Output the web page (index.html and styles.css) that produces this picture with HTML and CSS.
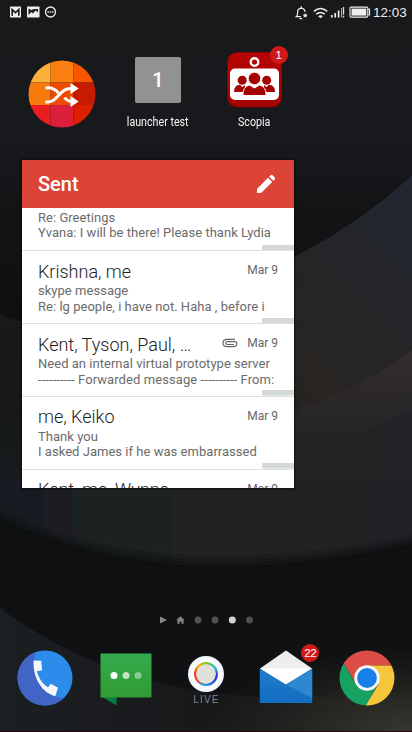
FILE: index.html
```html
<!DOCTYPE html>
<html lang="en">
<head>
<meta charset="utf-8">
<title>Home screen</title>
<link rel="stylesheet" href="styles.css">
</head>
<body>
<div class="phone">
  <svg class="wallpaper" viewBox="0 0 412 732" aria-hidden="true">
    <defs>
      <linearGradient id="base" x1="0" y1="0" x2="0" y2="1"><stop offset="0" stop-color="#18191b"/><stop offset=".2" stop-color="#17191c"/><stop offset=".28" stop-color="#131416"/><stop offset=".42" stop-color="#0e1011"/><stop offset="1" stop-color="#101112"/></linearGradient>
      <linearGradient id="mid" x1="0" y1="1" x2="1" y2="0"><stop offset="0" stop-color="#141719"/><stop offset=".5" stop-color="#282522"/><stop offset=".75" stop-color="#242529"/><stop offset="1" stop-color="#232733"/></linearGradient>
      <linearGradient id="low" x1="0" y1="0" x2="1" y2="0"><stop offset="0" stop-color="#171c1f"/><stop offset=".25" stop-color="#1b2021"/><stop offset=".6" stop-color="#242320"/><stop offset="1" stop-color="#232428"/></linearGradient>
      <linearGradient id="left" x1="0" y1="0" x2="0" y2="1"><stop offset="0" stop-color="#1a1917"/><stop offset=".6" stop-color="#161817"/><stop offset="1" stop-color="#171c1f"/></linearGradient>
      <linearGradient id="rose" x1="0" y1="0" x2="0" y2="1"><stop offset="0" stop-color="#3a2f31" stop-opacity=".8"/><stop offset="1" stop-color="#2c292a" stop-opacity="0"/></linearGradient>
      <linearGradient id="corner" x1="0" y1="0" x2="1" y2="0"><stop offset="0" stop-color="#1c1f22"/><stop offset=".5" stop-color="#17181a"/><stop offset="1" stop-color="#141414"/></linearGradient>
      <radialGradient id="glow" cx="1" cy="1" r=".9"><stop offset="0" stop-color="#38362f"/><stop offset="1" stop-color="#35332c" stop-opacity="0"/></radialGradient>
      <filter id="soft" x="-10%" y="-20%" width="120%" height="140%"><feGaussianBlur stdDeviation="5"/></filter>
    </defs>
    <rect width="412" height="732" fill="url(#base)"/>
    <path d="M412 176Q360 224 295 257Q220 300 120 340V480H412Z" fill="url(#mid)"/>
    <path d="M412 176Q360 224 295 257" fill="none" stroke="#303235" stroke-width=".6"/>
    <path d="M-30 430V498Q80 561 220 561Q340 560 442 530V430Z" fill="url(#low)" filter="url(#soft)"/>
    <path d="M412 350Q360 389 295 410Q200 440 0 440V480H412Z" fill="url(#low)"/>
    <path d="M412 350Q360 389 295 410V460L412 410Z" fill="url(#rose)"/>
    <path d="M0 314Q14 320 26 322V480H0Z" fill="url(#left)"/>
    <path d="M0 608Q44 641 100 664Q160 688 240 696Q330 700 412 692V732H0Z" fill="url(#corner)"/>
    <rect x="180" y="640" width="232" height="92" fill="url(#glow)"/>
    <rect y="731" width="412" height="1" fill="#24090f"/>
  </svg>

  <header class="status">
    <svg class="notices" width="50" height="14" viewBox="0 0 50 14">
      <rect x="1" y="1.5" width="11" height="11" rx=".7" fill="#eee"/><path d="M3.200 10.800V4.500L6.500 7.600L9.800 4.500v6.300" fill="none" stroke="#17181a" stroke-width="1.600"/>
      <rect x="18" y="1.500" width="12.500" height="11" rx=".7" fill="#eee"/><path d="M19.500 10L22.500 7L24 8.500L26.500 5.500L29 7.500V4H24.500L22.500 5L19.500 3.500Z" fill="#222"/>
      <circle cx="41.500" cy="7" r="5" fill="none" stroke="#eee" stroke-width="1.300"/><path d="M38.500 7h1.400M40.800 7h1.400M43.100 7h1.400" stroke="#eee" stroke-width="1.400"/>
    </svg>
    <div class="system">
      <svg width="76" height="16" viewBox="0 0 76 16" fill="none" stroke="#eee">
        <path d="M6 11.700H1.200Q2.600 10.500 2.600 8V6.600Q2.800 3.500 6.300 3.100Q9.800 3.500 10 7" stroke-width="1.200"/><path d="M6.300 1.300V3M4.500 13.700H7.200" stroke-width="1.200"/><path d="M10.200 7.900l.8 1.600 1.700.2-1.200 1.200.3 1.700-1.600-.8-1.600.8.300-1.700-1.200-1.200 1.700-.2z" fill="#eee" stroke="none"/>
        <path d="M18.800 6.300Q25.500 .8 32.300 6.300M21.200 9.200Q25.500 5.800 29.800 9.200" stroke-width="1.500"/><path d="M23.100 11.300Q25.500 9.200 27.900 11.300L25.500 13.300Z" fill="#eee" stroke="none"/>
        <path d="M36.800 10V12.500M40.200 8V12.500M43.600 5.500V12.500" stroke-width="1.700"/><path d="M46.600 3V12.500" stroke="#aaa" stroke-width="1.200"/><path d="M48.600 2V9.500M48.600 10.700V12.500" stroke-width="1.100"/>
        <rect x="55" y="2.100" width="17.800" height="10" rx="1" stroke-width="1.100"/><rect x="56.500" y="3.600" width="14.800" height="7" fill="#eee" stroke="none"/><path d="M73.300 4.200H74.500V10H73.300" stroke-width="1.200"/>
      </svg>
      <span class="clock">12:03</span>
    </div>
  </header>

  <section class="apps">
    <div class="app">
      <svg class="shuffle" width="68" height="68" viewBox="0 0 68 68">
        <clipPath id="disc"><circle cx="34" cy="34" r="33.500"/></clipPath>
        <g clip-path="url(#disc)"><path fill="#fdb03b" d="M0 0h22.500v22.500H0z"/><path fill="#f97f10" d="M22.500 0h23v22.500h-23z"/><path fill="#f85700" d="M45.500 0H68v22.500H45.500z"/><path fill="#f87a0c" d="M0 22.500h22.500V45H0z"/><path fill="#ed4a02" d="M22.500 22.500h23V45h-23z"/><path fill="#c51b00" d="M45.500 22.500H68V45H45.500z"/><path fill="#ed1c20" d="M0 45h22.500v23H0z"/><path fill="#dc203b" d="M22.500 45h23v23h-23z"/><path fill="#dd2000" d="M45.500 45H68v23H45.500z"/></g>
        <path d="M17.500 28Q25.500 27 30.500 33M17.500 42C31 43 30 28.500 43 28.500M36.500 37.500Q39 41 43 41.500" fill="none" stroke="#fff" stroke-width="3"/><path d="M42.500 23L50.700 28.500L42.500 34ZM42.500 36L50.700 41.500L42.500 47Z" fill="#fff"/>
      </svg>
    </div>
    <div class="app">
      <div class="tile">1</div>
      <div class="label">launcher test</div>
    </div>
    <div class="app scopia">
      <div class="appicon">
        <svg width="55" height="56" viewBox="0 0 55 56">
          <defs><linearGradient id="red" x1="0" y1="0" x2="0" y2="1"><stop offset="0" stop-color="#b80404"/><stop offset="1" stop-color="#a00303"/></linearGradient></defs>
          <rect x=".5" y=".5" width="54" height="54.500" rx="9.500" fill="url(#red)" stroke="#8c0000" stroke-width=".8"/>
          <circle cx="27.500" cy="10" r="3.800" fill="none" stroke="#fff" stroke-width="2.400"/>
          <rect x="3" y="16.500" width="49" height="31.500" rx="5" fill="#fff"/>
          <g fill="#a40404"><circle cx="15.200" cy="28.300" r="4.500"/><circle cx="39.700" cy="28.300" r="4.500"/><path d="M7 40Q7 33 13 32.800L15.500 35L18 33V40ZM48 40Q48 33 42 32.800L39.500 35L37 33V40Z"/><path d="M16 43.500Q15.500 34.500 22.500 33L27.500 36L32.500 33Q39.500 34.500 39 43.500Z" stroke="#fff" stroke-width="1"/><circle cx="27.500" cy="26.500" r="6.200" stroke="#fff" stroke-width=".8"/></g>
        </svg>
        <span class="badge">1</span>
      </div>
      <div class="label">Scopia</div>
    </div>
  </section>

  <section class="mail">
    <div class="mailhead"><h1>Sent</h1>
      <svg width="20" height="20" viewBox="0 0 20 20" fill="#fff"><path d="M1 19V14.900L12.100 3.800L16.200 7.900L5.100 19ZM13.200 2.700L14.800 1.100Q15.700.4 16.600 1.200L18.800 3.400Q19.600 4.300 18.900 5.200L17.300 6.800Z"/></svg>
    </div>
    <div class="list">
      <article class="row partial"><p class="line">Re: Greetings</p><p class="line">Yvana: I will be there! Please thank Lydia</p></article>
      <article class="row"><div class="top"><h2>Krishna, me</h2><time>Mar 9</time></div><p class="line">skype message</p><p class="line">Re: lg people, i have not. Haha , before i</p></article>
      <article class="row"><div class="top"><h2>Kent, Tyson, Paul, …</h2><svg class="clip" width="16" height="10" viewBox="0 0 16 10"><path d="M12 6.500H5.200Q3.700 6.500 3.700 5.100Q3.700 3.700 5.200 3.700H12.200Q14.800 3.700 14.800 5.500Q14.800 8.600 11.500 8.600H5Q1 8.600 1 5Q1 1.300 5 1.300H13" fill="none" stroke="#666" stroke-width="1.200"/></svg><time>Mar 9</time></div><p class="line">Need an internal virtual prototype server</p><p class="line dashes">---------- Forwarded message ---------- From:</p></article>
      <article class="row"><div class="top"><h2>me, Keiko</h2><time>Mar 9</time></div><p class="line">Thank you</p><p class="line">I asked James if he was embarrassed</p></article>
      <article class="row"><div class="top"><h2>Kent, me, Wynne</h2><time>Mar 9</time></div></article>
    </div>
  </section>

  <nav class="pages">
    <svg width="96" height="10" viewBox="0 0 96 10"><path d="M1 1.500L8 5L1 8.500Z" fill="#858585"/><path d="M17.300 5.300L21.500 1.300L25.700 5.300H24.600V8.700H22.500V6.500H20.500V8.700H18.400V5.300Z" fill="#858585"/><g fill="#505152"><circle cx="39" cy="5" r="3.400"/><circle cx="56" cy="5" r="3.400"/><circle cx="90.500" cy="5" r="3.400"/></g><circle cx="73.300" cy="5" r="3.500" fill="#d4d4d4"/></svg>
  </nav>

  <footer class="dock">
    <div class="slot">
      <svg width="56" height="56" viewBox="0 0 56 56"><clipPath id="pc"><circle cx="28" cy="28" r="27.500"/></clipPath><g clip-path="url(#pc)"><rect width="56" height="56" fill="#2b8ceb"/><path d="M18.500 0Q14 25 26 38Q34 47 47 48L40 56H0V0Z" fill="#4164c5"/></g><path d="M16.600 10.500L24.200 10.800L25.200 20.300L19.700 21.300C22 29 26 34.500 31 37.200L33.800 33.800L41 37.800L38.300 46.300C26 43 15.500 29 16.600 10.500Z" fill="#f4f7fb"/></svg>
    </div>
    <div class="slot">
      <svg width="52" height="53" viewBox="0 0 52 53"><defs><linearGradient id="gr" x1="0" y1="0" x2="0" y2="1"><stop offset="0" stop-color="#34ab50"/><stop offset="1" stop-color="#309b31"/></linearGradient></defs><path d="M.500 43L16.500 52.500V44Z" fill="#087c40"/><rect x=".5" y=".5" width="51" height="44" fill="url(#gr)"/><circle cx="14" cy="22.500" r="3.500" fill="#fff"/><circle cx="26" cy="22.500" r="3.500" fill="#c0e3c4"/><circle cx="38" cy="22.500" r="3.500" fill="#8bc894"/></svg>
    </div>
    <div class="slot live">
      <div class="livedisc"><div class="ring"></div></div><span>LIVE</span>
    </div>
    <div class="slot">
      <div class="envelope"><svg width="54" height="54" viewBox="0 0 54 54"><defs><linearGradient id="bl" x1="0" y1="0" x2="0" y2="1"><stop offset="0" stop-color="#237dcc"/><stop offset="1" stop-color="#126cc0"/></linearGradient></defs><path d="M1 18.500L27 .5L53 18.500L27 36Z" fill="#eee"/><path d="M1 18.500H53L27 36Z" fill="#fff"/><path d="M.8 18.500L27 34.500L53.200 18.500V53H.8Z" fill="url(#bl)"/><path d="M27 34.500L53.200 18.500V48Z" fill="#2f86d1"/></svg><span class="badge">22</span></div>
    </div>
    <div class="slot">
      <svg width="56" height="56" viewBox="0 0 56 56"><clipPath id="cc"><circle cx="28" cy="28" r="27.500"/></clipPath><g clip-path="url(#cc)"><path d="M0 0H56V15.500H28L17 34L4.500 13Z" fill="#dc4e45"/><path d="M4.500 13L16.500 33.500Q21 41 36.500 38L27 56H0V13Z" fill="#18a261"/><path d="M28 15.500H56V56H26.500L39.500 34Z" fill="#f5c53b"/></g><circle cx="28" cy="28" r="12.800" fill="#f4f6f8"/><circle cx="28" cy="28" r="9.900" fill="#187fe8"/></svg>
    </div>
  </footer>
</div>
</body>
</html>
```

FILE: styles.css
```css
* { box-sizing: border-box; }
body { margin: 0; background: #111; font-family: Roboto, "Liberation Sans", sans-serif; }
h1, h2, p { margin: 0; font-weight: 400; }
svg { display: block; }
.phone { position: relative; width: 412px; height: 732px; overflow: hidden; display: flex; flex-direction: column; }
.wallpaper { position: absolute; inset: 0; width: 412px; height: 732px; z-index: -1; }

.status { height: 25px; flex: none; display: flex; justify-content: space-between; padding: 5px 5px 0 9px; }
.system { display: flex; gap: 2px; }
.clock { color: #eee; font: 13.5px/16px "Liberation Sans", sans-serif; width: 34px; white-space: nowrap; }

.apps { height: 135px; flex: none; display: grid; grid-template-columns: repeat(4, 96px); padding: 26px 14px 0; }
.app { display: flex; flex-direction: column; align-items: center; }
.shuffle { margin-top: 9px; }
.tile { width: 46px; height: 46px; margin-top: 6px; border-radius: 2px; background: #929292; color: #fff; font-size: 20px; font-weight: 500; line-height: 47px; text-align: center; }
.label { margin-top: 12px; color: #f4f4f4; font-size: 12px; line-height: 14px; white-space: nowrap; transform: scaleX(.89); }
.appicon { position: relative; margin-top: 1px; }
.scopia .label { margin-top: 7px; }
.badge { position: absolute; width: 18px; height: 18px; border-radius: 50%; background: #d01a17; color: #fff; font: 11.5px/18px "Liberation Sans", sans-serif; text-align: center; letter-spacing: -.2px; }
.scopia .badge { right: -6px; top: -6px; }

.mail { width: 272px; height: 327.500px; margin-left: 22px; flex: none; background: #fff; overflow: hidden; box-shadow: 0 0 2px 1px rgba(0,0,0,.5); }
.mailhead { height: 48px; padding: 0 18px 0 16px; background: #db4437; display: flex; align-items: center; justify-content: space-between; }
.mailhead h1 { color: #fff; font-size: 20px; font-weight: 500; }
.list { display: flex; flex-direction: column; }
.row { height: 72.800px; flex: none; padding: 9px 16px 0; border-bottom: 1.300px solid #dedfde; background: linear-gradient(#d2dad3, #d2dad3) right bottom / 32px 5.500px no-repeat; }
.partial { height: 43.300px; padding-top: 2px; }
.top { height: 23px; display: flex; align-items: center; }
.top h2 { flex: 1; color: #222; font-size: 18px; font-weight: 300; line-height: 24px; white-space: nowrap; }
.top time { color: #666; font-size: 12px; line-height: 14px; margin-bottom: 3px; }
.clip { margin: 0 9px 3px 0; }
.line { color: #6b6b6b; font-size: 13px; line-height: 15.400px; letter-spacing: .03px; white-space: nowrap; }
.dashes { letter-spacing: .08px; }

.pages { height: 10px; margin-top: 127px; display: flex; padding-left: 158.500px; flex: none; }
.dock { display: grid; grid-template-columns: repeat(5, 80.400px); padding: 25px 5px 0; }
.slot { display: flex; flex-direction: column; align-items: center; }
.slot:nth-child(2) { padding-top: 3px; }
.live { padding-top: 6px; }
.livedisc { width: 36px; height: 36px; border-radius: 50%; display: grid; place-items: center; background: radial-gradient(#fff 40%, #e4edf8); }
.ring { width: 24px; height: 24px; border-radius: 50%; background: radial-gradient(circle closest-side, #dfe0d8 0 9.400px, transparent 10px), conic-gradient(#7fce16, #24b7e5 60deg, #3b27cf 100deg, #2364df 150deg, #17a7df 190deg, #ee5a43 230deg, #f33721 275deg, #f2b414 315deg, #7fce16); }
.live span { color: #858585; font: 10px/12px "Liberation Sans", sans-serif; letter-spacing: 1.200px; margin: 2px 0 0 1px; }
.envelope { position: relative; }
.envelope .badge { right: -6px; top: -6px; }
```
